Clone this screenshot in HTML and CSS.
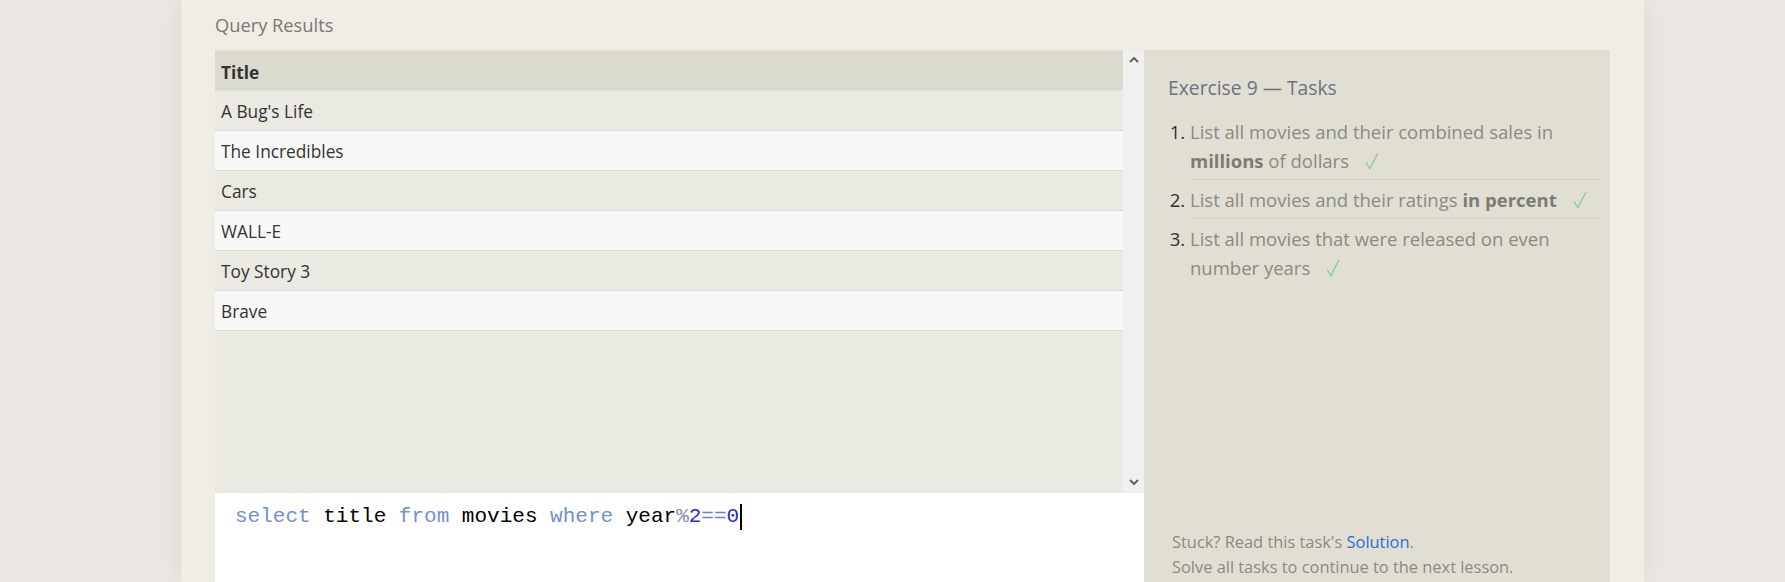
FILE: index.html
```html
<!DOCTYPE html>
<html>
<head>
<meta charset="utf-8">
<link rel="stylesheet" href="styles.css">
</head>
<body>
<div class="page">
  <div class="section-title">Query Results</div>
  <div class="main">
    <div class="left">
      <div class="results">
        <div class="table-wrap">
          <table class="results-table">
            <thead><tr><th>Title</th></tr></thead>
            <tbody>
              <tr class="odd"><td>A Bug's Life</td></tr>
              <tr class="even"><td>The Incredibles</td></tr>
              <tr class="odd"><td>Cars</td></tr>
              <tr class="even"><td>WALL-E</td></tr>
              <tr class="odd"><td>Toy Story 3</td></tr>
              <tr class="even"><td>Brave</td></tr>
            </tbody>
          </table>
        </div>
        <div class="scrollbar">
          <svg class="arrow" width="10" height="8" viewBox="0 0 10 8"><path d="M1 6 L5 2 L9 6" fill="none" stroke="#5a5a5a" stroke-width="1.8"/></svg>
          <svg class="arrow" width="10" height="8" viewBox="0 0 10 8"><path d="M1 2 L5 6 L9 2" fill="none" stroke="#5a5a5a" stroke-width="1.8"/></svg>
        </div>
      </div>
      <div class="editor">
        <div class="code"><span class="kw">select</span> title <span class="kw">from</span> movies <span class="kw">where</span> year<span class="op">%</span><span class="num">2</span><span class="eq">==</span><span class="num">0</span><span class="cursor"></span></div>
      </div>
    </div>
    <div class="tasks">
      <h2 class="tasks-title">Exercise 9 — Tasks</h2>
      <ol class="task-list">
        <li><span class="task-text">List all movies and their combined sales in <b>millions</b> of dollars</span><svg class="check" width="14" height="18" viewBox="0 0 14 18"><path d="M1 10.5 L4.8 16.5 L13 1" fill="none" stroke="#86cf96" stroke-width="1.4"/></svg></li>
        <li><span class="task-text">List all movies and their ratings <b>in percent</b></span><svg class="check" width="14" height="18" viewBox="0 0 14 18"><path d="M1 10.5 L4.8 16.5 L13 1" fill="none" stroke="#86cf96" stroke-width="1.4"/></svg></li>
        <li><span class="task-text">List all movies that were released on even number years</span><svg class="check" width="14" height="18" viewBox="0 0 14 18"><path d="M1 10.5 L4.8 16.5 L13 1" fill="none" stroke="#86cf96" stroke-width="1.4"/></svg></li>
      </ol>
      <div class="footer">
        <div>Stuck? Read this task's <a class="link" href="#">Solution</a>.</div>
        <div>Solve all tasks to continue to the next lesson.</div>
      </div>
    </div>
  </div>
</div>
</body>
</html>
```
FILE: styles.css
```css
html, body {
  margin: 0;
  padding: 0;
  height: 582px;
  overflow: hidden;
}
body {
  background: #ebe7e2;
  font-family: "Open Sans", "Noto Sans", sans-serif;
}
.page {
  margin-left: 181px;
  width: 1395px;
  height: 582px;
  padding: 0 34px;
  background: #f0ede6;
  box-shadow: 0 0 28px rgba(0, 0, 0, 0.07);
  display: flex;
  flex-direction: column;
}
.section-title {
  font-size: 18.3px;
  line-height: 24px;
  color: #7a7873;
  padding-top: 13px;
  margin-bottom: 13px;
}
.main {
  flex: 1;
  display: flex;
  min-height: 0;
}
.left {
  width: 929px;
  display: flex;
  flex-direction: column;
}
.results {
  height: 443px;
  display: flex;
  background: #eae9e2;
}
.table-wrap {
  flex: 1;
}
.results-table {
  width: 100%;
  border-collapse: collapse;
  font-size: 17.3px;
  color: #333;
}
.results-table th {
  text-align: left;
  font-weight: 700;
  background: #dadacf;
  height: 40px;
  padding: 3px 6px 0;
  border-top: 1px solid #e2e1da;
  border-bottom: 1px solid #e0dfd8;
  box-sizing: border-box;
}
.results-table td {
  height: 40px;
  padding: 2px 6px 0;
  box-sizing: border-box;
  border-bottom: 1px solid #dcdbd4;
}
.odd td { background: #eae9e2; }
.even td { background: #f8f8f8; }
.scrollbar {
  width: 21px;
  background: #f0f0f0;
  display: flex;
  flex-direction: column;
  justify-content: space-between;
  align-items: center;
  padding: 6px 0 7px;
  box-sizing: border-box;
}
.editor {
  flex: 1;
  background: #ffffff;
}
.code {
  font-family: "Liberation Mono", "Courier New", monospace;
  font-size: 21px;
  line-height: 24px;
  padding: 11px 0 0 20px;
  color: #000;
  display: flex;
  align-items: center;
  white-space: pre;
}
.kw { color: #7290cf; }
.op { color: #7e8db0; }
.num { color: #2a2ad8; }
.eq { color: #6482e0; }
.cursor {
  display: inline-block;
  width: 2px;
  height: 26px;
  background: #000;
  margin-left: 1px;
}
.tasks {
  width: 466px;
  background: #e1dfd4;
  padding: 25px 10px 3px 24px;
  box-sizing: border-box;
  display: flex;
  flex-direction: column;
}
.tasks-title {
  margin: 0 0 11px;
  font-weight: 400;
  font-size: 19.3px;
  line-height: 26px;
  color: #6c7281;
}
.task-list {
  margin: 0;
  padding-left: 22px;
  font-size: 18.5px;
  line-height: 29px;
  color: #8b8a84;
}
.task-list li {
  padding: 5px 0 4px;
  border-bottom: 1px solid #d4d2c8;
}
.task-list li:last-child {
  border-bottom: none;
}
.task-list li::marker {
  color: #2e2f38;
}
.task-list b {
  color: #7c7b76;
}
.check {
  margin-left: 16px;
  vertical-align: -2px;
}
.footer {
  margin-top: auto;
  padding-left: 4px;
  font-size: 16.4px;
  line-height: 25px;
  color: #8b8a84;
}
.link {
  color: #2a6fd6;
  text-decoration: none;
}
```
